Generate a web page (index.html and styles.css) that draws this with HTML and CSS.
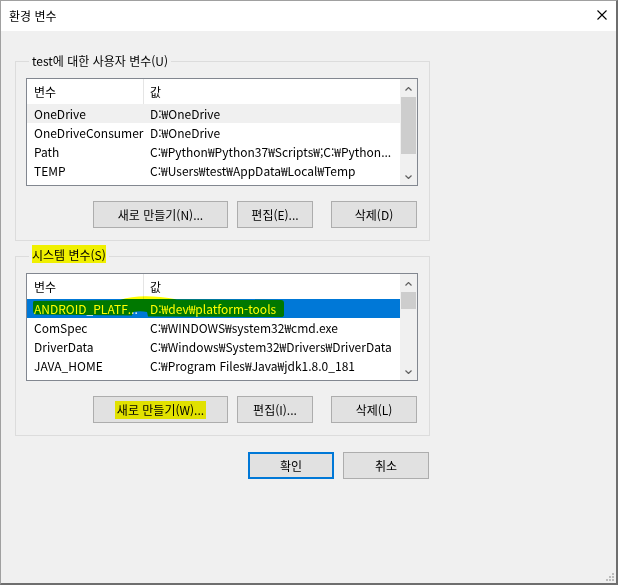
FILE: index.html
```html
<!DOCTYPE html>
<html lang="ko">
<head>
<meta charset="utf-8">
<title>환경 변수</title>
<link rel="stylesheet" href="styles.css">
</head>
<body>
<div class="window">
  <div class="titlebar">
    <span class="title">환경 변수</span>
    <svg class="close" width="10" height="10" viewBox="0 0 10 10"><path d="M0.5 0.5 L9.5 9.5 M9.5 0.5 L0.5 9.5" stroke="#000" stroke-width="1.1" fill="none"/></svg>
  </div>
  <div class="content">
    <div class="group">
      <div class="legend"><span>test에 대한 사용자 변수(U)</span></div>
      <div class="list">
        <div class="list-body">
          <div class="row head"><div class="c1">변수</div><div class="c2">값</div></div>
          <div class="row dim"><div class="c1">OneDrive</div><div class="c2">D:₩OneDrive</div></div>
          <div class="row"><div class="c1">OneDriveConsumer</div><div class="c2">D:₩OneDrive</div></div>
          <div class="row"><div class="c1">Path</div><div class="c2">C:₩Python₩Python37₩Scripts₩;C:₩Python...</div></div>
          <div class="row"><div class="c1">TEMP</div><div class="c2">C:₩Users₩test₩AppData₩Local₩Temp</div></div>
        </div>
        <div class="scrollbar">
          <div class="sb-btn sb-up"><svg width="7" height="4" viewBox="0 0 7 4"><polyline points="0.5,3.5 3.5,0.5 6.5,3.5" fill="none" stroke="#606060" stroke-width="1.2"/></svg></div>
          <div class="sb-track"><div class="thumb thumb-user"></div></div>
          <div class="sb-btn"><svg width="7" height="4" viewBox="0 0 7 4"><polyline points="0.5,0.5 3.5,3.5 6.5,0.5" fill="none" stroke="#606060" stroke-width="1.2"/></svg></div>
        </div>
      </div>
      <div class="btn-row">
        <div class="btn w-new">새로 만들기(N)...</div>
        <div class="btn w-edit">편집(E)...</div>
        <div class="btn w-del">삭제(D)</div>
      </div>
    </div>

    <div class="group group-sys">
      <div class="legend"><span class="hl-label">시스템 변수(S)</span></div>
      <div class="list">
        <div class="list-body">
          <div class="row head"><div class="c1">변수</div><div class="c2">값</div></div>
          <div class="row sel">
            <div class="c1">ANDROID_PLATF...</div><div class="c2">D:₩dev₩platform-tools</div>
            <svg class="hl-row" width="373" height="19" viewBox="0 0 373 19"><path d="M7 2 L93 1 Q114 -6 150 0.5 L254 1 Q257 1 257 4 L257 16 Q257 18 254 18 L121 17.5 L120 13 Q113 11.5 106 13 L105 16.5 L8 15.5 Q6 15 6 12 L6 4 Q6 2 7 2 Z" fill="#ffff00"/></svg>
          </div>
          <div class="row"><div class="c1">ComSpec</div><div class="c2">C:₩WINDOWS₩system32₩cmd.exe</div></div>
          <div class="row"><div class="c1">DriverData</div><div class="c2">C:₩Windows₩System32₩Drivers₩DriverData</div></div>
          <div class="row"><div class="c1">JAVA_HOME</div><div class="c2">C:₩Program Files₩Java₩jdk1.8.0_181</div></div>
        </div>
        <div class="scrollbar">
          <div class="sb-btn sb-up"><svg width="7" height="4" viewBox="0 0 7 4"><polyline points="0.5,3.5 3.5,0.5 6.5,3.5" fill="none" stroke="#606060" stroke-width="1.2"/></svg></div>
          <div class="sb-track"><div class="thumb thumb-sys"></div></div>
          <div class="sb-btn"><svg width="7" height="4" viewBox="0 0 7 4"><polyline points="0.5,0.5 3.5,3.5 6.5,0.5" fill="none" stroke="#606060" stroke-width="1.2"/></svg></div>
        </div>
      </div>
      <div class="btn-row">
        <div class="btn w-new"><span class="hl-btn">새로 만들기(W)...</span></div>
        <div class="btn w-edit">편집(I)...</div>
        <div class="btn w-del">삭제(L)</div>
      </div>
    </div>

    <div class="dialog-buttons">
      <div class="btn btn-ok">확인</div>
      <div class="btn btn-cancel">취소</div>
    </div>
  </div>
  <svg class="grip" width="8" height="8" viewBox="0 0 8 8">
    <rect x="6" y="0" width="2" height="2" fill="#bcbcbc"/>
    <rect x="3" y="3" width="2" height="2" fill="#bcbcbc"/>
    <rect x="6" y="3" width="2" height="2" fill="#bcbcbc"/>
    <rect x="0" y="6" width="2" height="2" fill="#bcbcbc"/>
    <rect x="3" y="6" width="2" height="2" fill="#bcbcbc"/>
    <rect x="6" y="6" width="2" height="2" fill="#bcbcbc"/>
  </svg>
</div>
</body>
</html>
```

FILE: styles.css
```css
html, body {
  margin: 0;
  padding: 0;
  background: #6e6e6e;
}
body {
  font-family: "Noto Sans CJK KR", sans-serif;
  font-size: 12px;
  color: #000;
}
.window {
  width: 618px;
  height: 585px;
  box-sizing: border-box;
  border-style: solid;
  border-width: 1px 2px 2px 1px;
  border-color: #a0a0a0 #6e6e6e #6e6e6e #a0a0a0;
  background: #f0f0f0;
  display: flex;
  flex-direction: column;
  position: relative;
}
.titlebar {
  flex: none;
  height: 30px;
  background: #fff;
  display: flex;
  align-items: center;
  justify-content: space-between;
  padding: 0 9px 0 8px;
}
.title {
  line-height: 16px;
  margin-bottom: 1px;
}
.close {
  display: block;
  margin-bottom: 2px;
}
.content {
  flex: 1;
  padding: 30px 0 0 14px;
  display: flex;
  flex-direction: column;
}
.group {
  flex: none;
  width: 415px;
  height: 180px;
  box-sizing: border-box;
  border: 1px solid #dcdcdc;
  padding: 0 11px 12px 10px;
  display: flex;
  flex-direction: column;
}
.group-sys {
  margin-top: 15px;
}
.legend {
  align-self: flex-start;
  height: 16px;
  line-height: 16px;
  margin: -9px 0 0 3px;
  padding: 0 3px;
  background: #f0f0f0;
  white-space: nowrap;
}
.hl-label {
  display: inline-block;
  vertical-align: top;
  line-height: 16px;
  padding: 2px 0 0;
  margin-top: -3px;
  background: #f0f000;
}
.list {
  flex: none;
  margin-top: 9px;
  height: 108px;
  box-sizing: border-box;
  border: 1px solid #828790;
  background: #fff;
  display: flex;
  overflow: hidden;
}
.list-body {
  flex: 1;
  overflow: hidden;
  display: flex;
  flex-direction: column;
}
.row {
  flex: none;
  display: flex;
  height: 19px;
  line-height: 19px;
  white-space: nowrap;
  position: relative;
}
.row.head {
  height: 25px;
  line-height: 25px;
}
.c1 {
  flex: none;
  width: 117px;
  box-sizing: border-box;
  padding-left: 7px;
  overflow: hidden;
}
.head .c1 {
  border-right: 1px solid #e5e5e5;
}
.c2 {
  flex: 1;
  padding-left: 6px;
  overflow: hidden;
}
.row.dim {
  background: #f0f0f0;
}
.row.sel {
  background: #0078d7;
  color: #fff;
}
.hl-row {
  position: absolute;
  left: 0;
  top: 0;
  overflow: visible;
  mix-blend-mode: multiply;
  pointer-events: none;
}
.scrollbar {
  flex: none;
  width: 17px;
  background: #f0f0f0;
  display: flex;
  flex-direction: column;
}
.sb-btn {
  flex: none;
  height: 17px;
  display: flex;
  align-items: center;
  justify-content: center;
}
.sb-btn svg {
  display: block;
}
.sb-up {
  padding-top: 2px;
  height: 15px;
}
.sb-track {
  flex: 1;
}
.thumb {
  margin: 0 1px;
  background: #cdcdcd;
}
.thumb-user {
  margin-top: 1px;
  height: 57px;
}
.thumb-sys {
  margin-top: 1px;
  height: 17px;
}
.btn-row {
  flex: none;
  display: flex;
  justify-content: flex-end;
  margin-top: 15px;
}
.btn {
  flex: none;
  height: 27px;
  box-sizing: border-box;
  border: 1px solid #adadad;
  background: #e1e1e1;
  display: flex;
  align-items: center;
  justify-content: center;
  white-space: nowrap;
}
.w-new {
  width: 135px;
}
.w-edit {
  width: 76px;
  margin-left: 9px;
}
.w-del {
  width: 86px;
  margin-left: 18px;
  margin-right: 1px;
}
.hl-btn {
  display: inline-block;
  line-height: 18px;
  padding: 0 2px;
  background: #e1e100;
}
.dialog-buttons {
  flex: none;
  width: 415px;
  display: flex;
  justify-content: flex-end;
  margin-top: 16px;
}
.btn-ok {
  width: 86px;
  border: 2px solid #0078d7;
}
.btn-cancel {
  width: 86px;
  margin-left: 9px;
  margin-right: 1px;
}
.grip {
  position: absolute;
  right: 2px;
  bottom: 2px;
  display: block;
}
```
